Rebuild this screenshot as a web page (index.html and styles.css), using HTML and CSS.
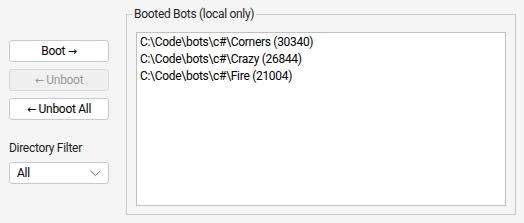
FILE: index.html
```html
<!DOCTYPE html>
<html>
<head>
<title>Booted Bots</title>
<link rel="stylesheet" href="styles.css">
</head>
<body>
<div class="panel">
	<div class="side">
		<button class="btn">Boot <span class="arrow">&rarr;</span></button>
		<button class="btn" disabled><span class="arrow">&larr;</span> Unboot</button>
		<button class="btn"><span class="arrow">&larr;</span> Unboot All</button>
		<div class="label">Directory Filter</div>
		<div class="select">
			<span>All</span>
			<svg width="11" height="7" viewBox="0 0 11 7"><path d="M0.5 0.8 L5.5 5.6 L10.5 0.8" fill="none" stroke="#6b6b6b" stroke-width="1"/></svg>
		</div>
	</div>
	<fieldset class="group">
		<legend>Booted Bots (local only)</legend>
		<div class="list">
			<div class="item">C:\Code\bots\c#\Corners (30340)</div>
			<div class="item">C:\Code\bots\c#\Crazy (26844)</div>
			<div class="item">C:\Code\bots\c#\Fire (21004)</div>
		</div>
	</fieldset>
</div>
</body>
</html>
```

FILE: styles.css
```css
* {
	font-family: Roboto, "Noto Sans", Sans-Serif;
	font-size: 12px;
	letter-spacing: -0.3px;
	box-sizing: border-box;
}
body {
	margin: 0;
	background-color: #f5f5f5;
	color: #000;
}
.panel {
	display: flex;
	align-items: flex-start;
	padding: 6px 0 0 9px;
}
.side {
	display: flex;
	flex-direction: column;
	width: 100px;
	margin-top: 34px;
}
.btn {
	height: 22px;
	margin-bottom: 7px;
	padding: 0;
	background-color: #fff;
	border: 1px solid #c5cadb;
	border-radius: 3px;
	color: #000;
	line-height: 18px;
}
.btn:disabled {
	background-color: #f0f0f0;
	border-color: #d6d9e2;
	color: #9a9a9a;
}
.arrow {
	font-family: "DejaVu Sans", Sans-Serif;
	font-size: 11px;
}
.label {
	margin-top: 13px;
	line-height: 16px;
	color: #1e1e1e;
}
.select {
	display: flex;
	justify-content: space-between;
	align-items: center;
	height: 22px;
	margin-top: 6px;
	padding: 0 7px 0 7px;
	background-color: #fff;
	border: 1px solid #c5cadb;
	border-radius: 3px;
}
.group {
	width: 390px;
	height: 209px;
	margin: 0 0 0 17px;
	padding: 1px 9px 9px 9px;
	border: 1px solid #c9c9c9;
}
.group legend {
	padding: 0 2px;
	margin-left: -4px;
	line-height: 16px;
	color: #1e1e1e;
}
.list {
	height: 174px;
	margin-top: 9px;
	padding: 1px 3px;
	background-color: #fff;
	border: 1px solid #c0c0c0;
}
.item {
	line-height: 17px;
	white-space: nowrap;
}
```
